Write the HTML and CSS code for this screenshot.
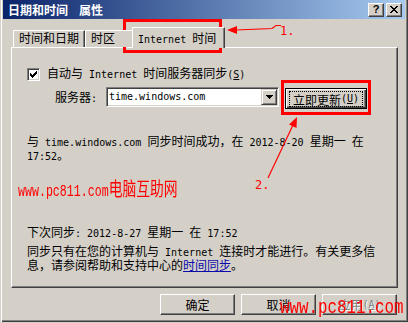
FILE: index.html
```html
<!DOCTYPE html>
<html lang="zh-CN">
<head>
<meta charset="utf-8">
<title>日期和时间 属性</title>
<link rel="stylesheet" href="styles.css">
</head>
<body>
<div class="win">
  <div class="titlebar">
    <span class="title">日期和时间<span class="title-gap">属性</span></span>
    <div class="tb-btns">
      <span class="tb-btn help">?</span>
      <span class="tb-btn"><svg class="px" width="8" height="7" viewBox="0 0 8 7"><path d="M0 0h2v1H0zM6 0h2v1H6zM1 1h2v1H1zM5 1h2v1H5zM2 2h4v1H2zM3 3h2v1H3zM2 4h4v1H2zM1 5h2v1H1zM5 5h2v1H5zM0 6h2v1H0zM6 6h2v1H6z"/></svg></span>
    </div>
  </div>

  <div class="tabs">
    <div class="tab">时间和日期</div>
    <div class="tab tab-tz">时区</div>
    <div class="tab sel"><span class="en">Internet </span>时间</div>
  </div>

  <div class="panel">
    <div class="row-check">
      <span class="checkbox"><svg class="px" width="7" height="7" viewBox="0 0 7 7"><path d="M6 0h1v1H6zM5 1h2v1H5zM0 2h1v1H0zM4 2h3v1H4zM0 3h2v1H0zM3 3h3v1H3zM0 4h5v1H0zM1 5h3v1H1zM2 6h1v1H2z"/></svg></span>
      <span class="check-label">自动与<span class="en"> Internet </span>时间服务器同步<span class="en">(<u>S</u>)</span></span>
    </div>

    <div class="row-server">
      <span class="label">服务器<span class="en">:</span></span>
      <div class="combo">
        <span class="combo-text">time.windows.com</span>
        <span class="drop"><svg class="px" width="7" height="4" viewBox="0 0 7 4"><path d="M0 0h7v1H6v1H5v1H4v1H3V3H2V2H1V1H0z"/></svg></span>
      </div>
      <button class="btn btn-default"><span class="focus">立即更新<span class="en">(<u>U</u>)</span></span></button>
    </div>

    <p class="msg">与<span class="en"> time.windows.com </span>同步时间成功，在<span class="en"> 2012-8-20 </span>星期一<span class="en"> </span>在<span class="en"> 17:52</span>。</p>

    <p class="next">下次同步<span class="en">: 2012-8-27 </span>星期一<span class="en"> </span>在<span class="en"> 17:52</span></p>

    <p class="info">同步只有在您的计算机与<span class="en"> Internet </span>连接时才能进行。有关更多信息，请参阅帮助和支持中心的<a class="link" href="#">时间同步</a>。</p>
  </div>

  <div class="actions">
    <button class="btn">确定</button>
    <button class="btn">取消</button>
    <button class="btn" disabled>应用<span class="en">(<u>A</u>)</span></button>
  </div>

  <div class="mark-box mark-tab"></div>
  <div class="mark-box mark-btn"></div>
  <svg class="marks" width="408" height="323" viewBox="0 0 408 323">
    <polygon points="227,30 237,26 237,34"/>
    <polyline class="mline" points="236,30 272,28.5 276,25.5 281,25.5"/>
    <text class="mtext" x="280" y="35">1.</text>
    <polygon points="297,117 289,124.5 296.5,128"/>
    <line class="mline" x1="293" y1="125" x2="268" y2="178"/>
    <text class="mtext" x="255" y="189">2.</text>
  </svg>
  <div class="wm wm1"><span class="wm1-en">www.pc811.com</span>电脑互助网</div>
  <div class="wm wm2">www.pc811.com</div>
</div>
</body>
</html>
```

FILE: styles.css
```css
* { box-sizing: border-box; }
html, body { margin: 0; padding: 0; }
body {
  width: 408px;
  height: 323px;
  overflow: hidden;
  background: #D4D0C8;
  color: #000;
  font-family: "Noto Sans CJK SC", "Noto Sans CJK JP", sans-serif;
  font-size: 12px;
}
.en {
  font-family: "DejaVu Sans Mono", monospace;
  font-size: 10px;
  line-height: 10px;
}
.px { display: block; shape-rendering: crispEdges; fill: #000; }

.win {
  position: relative;
  width: 408px;
  height: 322px;
  padding: 0 3px;
  background: #D4D0C8;
  box-shadow: inset 1px 0 0 #D4D0C8, inset 2px 0 0 #fff,
              inset -1px -1px 0 #404040, inset -2px -2px 0 #808080;
}

/* title bar */
.titlebar {
  height: 19px;
  display: flex;
  align-items: center;
  justify-content: space-between;
  padding: 0 3px 0 5px;
  background: linear-gradient(to right, #0A246A, #A6CAF0);
}
.title { color: #fff; font-weight: bold; font-size: 12px; line-height: 19px; white-space: nowrap; }
.title-gap { margin-left: 11px; }
.tb-btns { display: flex; gap: 2px; }
.tb-btn {
  width: 16px;
  height: 14px;
  display: flex;
  align-items: center;
  justify-content: center;
  background: #D4D0C8;
  border: 1px solid;
  border-color: #fff #404040 #404040 #fff;
  box-shadow: inset -1px -1px 0 #808080;
}
.help { font: bold 11px/1 "Liberation Sans", sans-serif; color: #000; padding-bottom: 1px; }

/* tabs */
.tabs {
  position: relative;
  z-index: 1;
  height: 28px;
  display: flex;
  align-items: flex-end;
  padding-left: 10px;
}
.tab {
  height: 17px;
  padding: 0 5px;
  line-height: 13px;
  white-space: nowrap;
  background: #D4D0C8;
  border: 1px solid;
  border-bottom: 0;
  border-color: #fff #404040 transparent #fff;
  box-shadow: inset -1px 0 0 #808080;
}
.tab-tz { width: 49px; }
.tab.sel {
  height: 21px;
  margin: 0 -2px -1px;
  padding: 3px 8px 0 5px;
}

/* panel */
.panel {
  width: 387px;
  height: 241px;
  margin-left: 8px;
  padding: 18px 15px 0;
  border: 1px solid;
  border-color: #fff #404040 #404040 #fff;
  box-shadow: inset -1px -1px 0 #808080;
}
.row-check { display: flex; align-items: flex-start; gap: 7px; }
.checkbox {
  flex: none;
  width: 13px;
  height: 13px;
  margin-top: 2px;
  display: flex;
  align-items: center;
  justify-content: center;
  background: #fff;
  border: 1px solid;
  border-color: #808080 #fff #fff #808080;
  box-shadow: inset 1px 1px 0 #404040, inset -1px -1px 0 #D4D0C8;
}
.check-label { line-height: 13px; white-space: nowrap; }

.row-server {
  display: flex;
  align-items: flex-start;
  margin-top: 6px;
  padding-left: 28px;
}
.label { width: 51px; line-height: 20px; white-space: nowrap; }
.combo {
  flex: none;
  width: 173px;
  height: 20px;
  display: flex;
  padding: 1px;
  background: #fff;
  border: 1px solid;
  border-color: #808080 #fff #fff #808080;
  box-shadow: inset 1px 1px 0 #404040, inset -1px -1px 0 #D4D0C8;
}
.combo-text {
  flex: 1;
  padding-left: 1px;
  font-family: "DejaVu Sans Mono", monospace;
  font-size: 10px;
  line-height: 16px;
}
.drop {
  width: 16px;
  height: 16px;
  display: flex;
  align-items: center;
  justify-content: center;
  background: #D4D0C8;
  border: 1px solid;
  border-color: #D4D0C8 #404040 #404040 #D4D0C8;
  box-shadow: inset 1px 1px 0 #fff, inset -1px -1px 0 #808080;
}

.btn {
  width: 75px;
  height: 21px;
  padding: 0;
  display: flex;
  align-items: center;
  justify-content: center;
  background: #D4D0C8;
  color: #000;
  font-family: "Noto Sans CJK SC", "Noto Sans CJK JP", sans-serif;
  font-size: 12px;
  line-height: 13px;
  border: 1px solid;
  border-color: #fff #404040 #404040 #fff;
  box-shadow: inset -1px -1px 0 #808080;
  white-space: nowrap;
}
.btn-default {
  width: 82px;
  margin: 1px 0 0 6px;
  padding: 2px 3px 1px;
  align-items: stretch;
  border: 1px solid #000;
  box-shadow: inset 1px 1px 0 #fff, inset -1px -1px 0 #404040, inset -2px -2px 0 #808080;
}
.focus {
  flex: 1;
  display: flex;
  align-items: center;
  justify-content: center;
  border: 1px dotted #000;
}
.btn:disabled { color: #808080; text-shadow: 1px 1px 0 #fff; }

.msg, .next, .info { margin: 0; line-height: 13px; }
.msg { margin-top: 25px; }
.next { margin-top: 63px; }
.info { margin-top: 5px; }
.link { color: #0A0AAA; text-decoration: underline; }

.actions {
  display: flex;
  justify-content: flex-end;
  gap: 6px;
  margin: 6px 8px 0 0;
}

/* annotations over the screenshot */
.mark-box { position: absolute; border: 3px solid #f00; }
.mark-tab { left: 123px; top: 19px; width: 99px; height: 34px; }
.mark-btn { left: 281px; top: 80px; width: 90px; height: 35px; }
.marks { position: absolute; left: 0; top: 0; fill: #f00; pointer-events: none; }
.mline { fill: none; stroke: #f00; stroke-width: 1.2; }
.mtext { font-family: "DejaVu Sans Mono", monospace; font-size: 12px; fill: #f00; }

.wm {
  position: absolute;
  color: #f00;
  white-space: nowrap;
  transform-origin: 0 0;
  pointer-events: none;
}
.wm1 {
  left: 18px;
  top: 178px;
  font-family: "Noto Sans CJK SC", sans-serif;
  font-size: 19px;
  line-height: 19px;
  transform: scaleX(0.726);
}
.wm1-en { font-family: "Liberation Mono", monospace; font-size: 16px; }
.wm2 {
  left: 280px;
  top: 297px;
  font-family: "Liberation Mono", monospace;
  font-size: 21px;
  line-height: 21px;
  transform: scaleX(0.754);
}
```
